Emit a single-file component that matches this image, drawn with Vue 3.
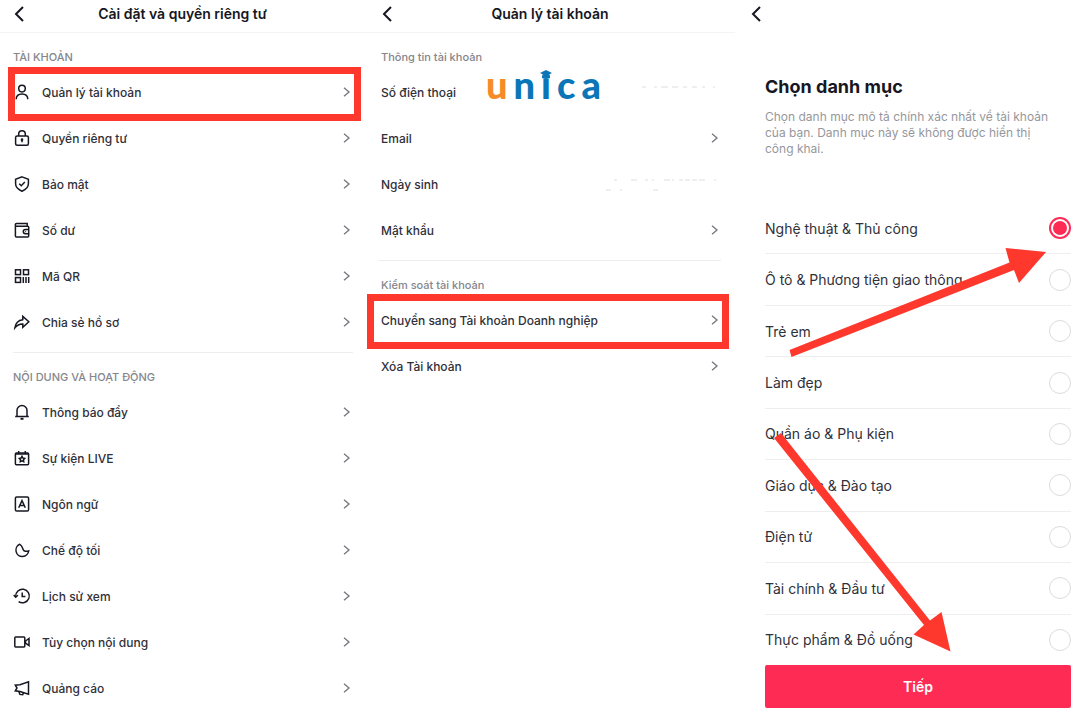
<script setup>
import { ref } from 'vue'

const accountRows = [
  { label: 'Quản lý tài khoản', icon: 'user', marked: true },
  { label: 'Quyền riêng tư', icon: 'lock' },
  { label: 'Bảo mật', icon: 'shield' },
  { label: 'Số dư', icon: 'wallet' },
  { label: 'Mã QR', icon: 'qr' },
  { label: 'Chia sẻ hồ sơ', icon: 'share' },
]
const contentRows = [
  { label: 'Thông báo đẩy', icon: 'bell' },
  { label: 'Sự kiện LIVE', icon: 'event' },
  { label: 'Ngôn ngữ', icon: 'language' },
  { label: 'Chế độ tối', icon: 'moon' },
  { label: 'Lịch sử xem', icon: 'history' },
  { label: 'Tùy chọn nội dung', icon: 'video' },
  { label: 'Quảng cáo', icon: 'megaphone' },
]
const settingGroups = [
  { title: 'TÀI KHOẢN', rows: accountRows },
  { title: 'NỘI DUNG VÀ HOẠT ĐỘNG', rows: contentRows },
]
const manageGroups = [
  {
    title: 'Thông tin tài khoản',
    rows: [
      { label: 'Số điện thoại', trace: 'M36 4h4M48 4h3M55 4h7M66 4h6M77 4h4M86 4h5M96 4h3M107 4h2' },
      { label: 'Email' },
      { label: 'Ngày sinh', trace: 'M8 5h3M25 5h6M39 5h3M46 5h2M58 5h6M66 5h2M73 5h4M79 5h5M86 5h5M93 5h6M108 5h2M0 15h5M14 15h2M47 15h5' },
      { label: 'Mật khẩu' },
    ],
  },
  {
    title: 'Kiểm soát tài khoản',
    rows: [
      { label: 'Chuyển sang Tài khoản Doanh nghiệp', marked: true },
      { label: 'Xóa Tài khoản' },
    ],
  },
]
const categories = [
  'Nghệ thuật & Thủ công',
  'Ô tô & Phương tiện giao thông',
  'Trẻ em',
  'Làm đẹp',
  'Quần áo & Phụ kiện',
  'Giáo dục & Đào tạo',
  'Điện tử',
  'Tài chính & Đầu tư',
  'Thực phẩm & Đồ uống',
]
const chosen = ref(categories[0])

const icons = {
  user: '<circle cx="8" cy="4.6" r="3.3"/><path d="M2.2 15.2c0-3.600 2.400-5.300 5.800-5.300s5.800 1.700 5.800 5.300"/>',
  lock: '<rect x="1.600" y="6" width="12.800" height="9.200" rx="1.500"/><path d="M4.700 6V4.100a3.300 3.300 0 0 1 6.600 0V6M8 9.500v2.800"/><circle cx="8" cy="9.700" r=".6"/>',
  shield: '<path d="M8 .9l6.400 2.300v4.600c0 3.800-3 6-6.400 7.400C4.600 13.800 1.600 11.600 1.600 7.800V3.200z"/><path d="M5.200 7.700l2.100 2 3.500-3.600"/>',
  wallet: '<path d="M1.400 2.900v11.200a1 1 0 0 0 1 1h11.300a1 1 0 0 0 1-1V5.200a1 1 0 0 0-1-1H2.600a1.200 1.200 0 0 1 0-2.600h10.600v2.600"/><path d="M14.700 7.500h-3.300a2.100 2.100 0 0 0 0 4.200h3.300"/><path d="M11.300 9.600h.8"/>',
  qr: '<rect x="1.500" y="1.800" width="5" height="4.800"/><rect x="9.500" y="1.800" width="5" height="4.800"/><rect x="1.500" y="9.600" width="5" height="4.800"/><path d="M9.300 8.900v6.200M12 8.900v6.200M14.700 8.900v6.200"/>',
  share: '<path d="M8.800 2.400l6 5.400-6 5.400V10C5.500 9.800 3.100 11.200.9 13.900 1.500 9.200 4.300 6.200 8.800 5.700z"/>',
  bell: '<path d="M1.200 12.500h13.600M3 12.300V6.600a5 5 0 0 1 10 0v5.700"/><path d="M6.500 14.800h3" stroke-width="2"/>',
  event: '<rect x="1.400" y="3" width="13.200" height="11.800" rx="1"/><path d="M4.700 1v3.600M11.300 1v3.600M1.400 4h13.200"/><path d="M8 6.400l.9 1.600 1.800.4-1.200 1.400.2 1.900L8 10.900l-1.700.8.200-1.900-1.200-1.400L7.100 8z"/>',
  language: '<rect x="1.400" y="1" width="13.200" height="14" rx="1.300"/><path d="M4.700 11.700L8 4.600l3.300 7.100M5.900 9.500h4.200"/>',
  moon: '<path d="M5.800 2.300a6.400 6.400 0 1 0 8.900 6.600c-2.500 1-4.900.3-5.600-1.500-.8-2.100-1.100-3.900-3.300-5.100z"/>',
  history: '<path d="M1.700 8.500A6.800 6.800 0 1 1 4.600 13.600"/><path d="M-.3 6.900l2 2.300 2.200-2M8.200 4.600v4h3.200"/>',
  video: '<rect x=".8" y="3.100" width="10" height="9.800" rx=".8"/><path d="M11.500 7l3.500-2.500v7L11.500 9z"/>',
  megaphone: '<path d="M14.500 1.700v12.500L6 11.500 1.300 10.800 3 8 1.300 5.200 6 4.800z"/><path d="M4.900 11.400l1 3 2.800.3.800-2"/>',
}
</script>

<template>
  <main class="screens">
    <section class="screen">
      <header class="bar">
        <button class="back" type="button" aria-label="Quay lại">
          <svg viewBox="0 0 12 18"><path d="M10 2L3 9l7 7" /></svg>
        </button>
        <h1>Cài đặt và quyền riêng tư</h1>
      </header>
      <section v-for="group in settingGroups" :key="group.title" class="group">
        <h2>{{ group.title }}</h2>
        <ul>
          <li v-for="row in group.rows" :key="row.label">
            <button type="button" class="row">
              <svg class="icon" viewBox="0 0 16 16" v-html="icons[row.icon]" />
              <span class="name">{{ row.label }}</span>
              <svg class="chevron" viewBox="0 0 8 12"><path d="M1 1l6 5-6 5" /></svg>
            </button>
            <span v-if="row.marked" class="frame" />
          </li>
        </ul>
      </section>
    </section>

    <section class="screen manage">
      <header class="bar">
        <button class="back" type="button" aria-label="Quay lại">
          <svg viewBox="0 0 12 18"><path d="M10 2L3 9l7 7" /></svg>
        </button>
        <h1>Quản lý tài khoản</h1>
      </header>
      <section v-for="group in manageGroups" :key="group.title" class="group">
        <h2>{{ group.title }}</h2>
        <ul>
          <li v-for="row in group.rows" :key="row.label">
            <button type="button" class="row">
              <span class="name">{{ row.label }}</span>
              <svg v-if="row.trace" class="trace" viewBox="0 0 112 18"><path :d="row.trace" /></svg>
              <svg v-else class="chevron" viewBox="0 0 8 12"><path d="M1 1l6 5-6 5" /></svg>
            </button>
            <span v-if="row.marked" class="frame" />
          </li>
        </ul>
      </section>
      <div class="logo">
        <span class="u">u</span><span>n</span><span class="i">i<svg viewBox="0 0 14 10"><path d="M7 0l6 3-6 3-6-3z" /><path d="M3 5l4 2 4-2v3q-4 2-8 0z" /></svg></span><span>c</span><span>a</span>
      </div>
    </section>

    <section class="screen picker">
      <header class="bar">
        <button class="back" type="button" aria-label="Quay lại">
          <svg viewBox="0 0 12 18"><path d="M10 2L3 9l7 7" /></svg>
        </button>
      </header>
      <h1>Chọn danh mục</h1>
      <p>Chọn danh mục mô tả chính xác nhất về tài khoản của bạn. Danh mục này sẽ không được hiển thị công khai.</p>
      <ul class="options">
        <li v-for="name in categories" :key="name">
          <label>
            <span>{{ name }}</span>
            <input v-model="chosen" type="radio" name="category" :value="name" />
          </label>
        </li>
      </ul>
      <button class="next" type="button">Tiếp</button>
      <svg class="arrows" viewBox="0 0 352 715">
        <path d="M54.500 350L274.500 262.500 270.500 248 311 252 284 283 279 270 56.500 357z" />
        <path d="M39 438L189 625 178.500 634.500 215.500 651.500 206.500 612 195 620.500 46 433z" />
      </svg>
    </section>
  </main>
</template>

<style>
body {
  background: #fff;
}
</style>

<style scoped>
.screens {
  display: grid;
  grid-template-columns: 365fr 370fr 352fr;
  min-height: 100vh;
  overflow: hidden;
  color: #30303a;
  font-family: Inter, "Noto Sans", sans-serif;
  font-size: 12px;
}
.screen {
  position: relative;
}
button {
  padding: 0;
  border: 0;
  background: none;
  color: inherit;
  font: inherit;
  cursor: pointer;
}
svg {
  fill: none;
  stroke: currentColor;
  overflow: visible;
}
ul {
  margin: 0;
  padding: 0;
  list-style: none;
}
h1,
h2,
p {
  margin: 0;
}
.bar {
  display: grid;
  grid-template-columns: 32px 1fr 32px;
  align-items: center;
  height: 28px;
  padding: 0 0 4px;
  border-bottom: 1px solid #f4f4f4;
}
.bar h1 {
  color: #161722;
  font-size: 14px;
  font-weight: 600;
  line-height: 28px;
  text-align: center;
}
.back {
  display: flex;
  padding-left: 13px;
}
.back svg {
  width: 12px;
  height: 18px;
  stroke-width: 2;
  color: #161722;
}
.manage .back {
  padding-left: 16px;
}
.group {
  margin: 0 12px 0 13px;
  padding: 16px 0 7px;
}
.group:last-of-type {
  padding-bottom: 0;
}
.group + .group {
  border-top: 1px solid #eee;
}
.group h2 {
  margin-bottom: 4px;
  color: #85868c;
  font-size: 11px;
  font-weight: 500;
  line-height: 16px;
}
.group li {
  position: relative;
}
.row {
  display: flex;
  align-items: center;
  width: 100%;
  height: 46px;
  padding-right: 3px;
  font-weight: 500;
  text-align: left;
}
.name {
  flex: 1;
}
.icon {
  width: 16px;
  height: 16px;
  margin: 0 12px 0 1px;
  color: #161722;
  stroke-width: 1.5;
}
.chevron {
  width: 7px;
  height: 10px;
  color: #76777d;
  stroke-width: 1.6;
}
.frame {
  position: absolute;
  inset: -2px -8px -6px -5px;
  border: 7px solid #fe382d;
  pointer-events: none;
}
.manage .group {
  margin-right: 14px;
}
.manage h2,
.manage .row {
  padding-left: 3px;
}
.manage .frame {
  inset: -3px -8px -6px -11px;
}
.trace {
  width: 112px;
  height: 18px;
  color: #dedede;
  stroke-width: 1;
}
.logo {
  position: absolute;
  top: 60px;
  left: 121px;
  display: flex;
  gap: 6px;
  color: #0a76b8;
  font-family: Lato, sans-serif;
  font-size: 38px;
  font-weight: 900;
  line-height: 48px;
}
.logo .u {
  color: #f68b28;
}
.logo .i {
  position: relative;
}
.logo svg {
  position: absolute;
  top: 10px;
  left: -2px;
  width: 14px;
  height: 10px;
  fill: currentColor;
  stroke: none;
}
.picker {
  display: flex;
  flex-direction: column;
  padding: 0 16px 7px 30px;
}
.picker .bar {
  margin-left: -28px;
  border: 0;
}
.picker h1 {
  margin-top: 43px;
  color: #161722;
  font-size: 18px;
  font-weight: 700;
  line-height: 24px;
}
.picker p {
  margin: 10px 12px 46px 0;
  color: #96979c;
  line-height: 16px;
}
.options {
  display: flex;
  flex: 1;
  flex-direction: column;
  font-size: 14px;
}
.options li {
  display: flex;
  flex: 1;
  border-bottom: 1px solid #eee;
}
.options li:last-child {
  border: 0;
}
.options label {
  display: flex;
  flex: 1;
  align-items: center;
  justify-content: space-between;
}
.options input {
  appearance: none;
  width: 22px;
  height: 22px;
  margin: 0;
  border: 1px solid #dcdcdc;
  border-radius: 50%;
}
.options input:checked {
  border: 2px solid #fe2c55;
  background: #fe2c55;
  background-clip: content-box;
  padding: 2px;
}
.next {
  height: 43px;
  border-radius: 2px;
  background: #fe2c55;
  color: #fff;
  font-size: 14px;
  font-weight: 600;
}
.arrows {
  position: absolute;
  top: 0;
  left: 0;
  width: 352px;
  height: 715px;
  fill: #fe382d;
  stroke: none;
  pointer-events: none;
}
</style>
